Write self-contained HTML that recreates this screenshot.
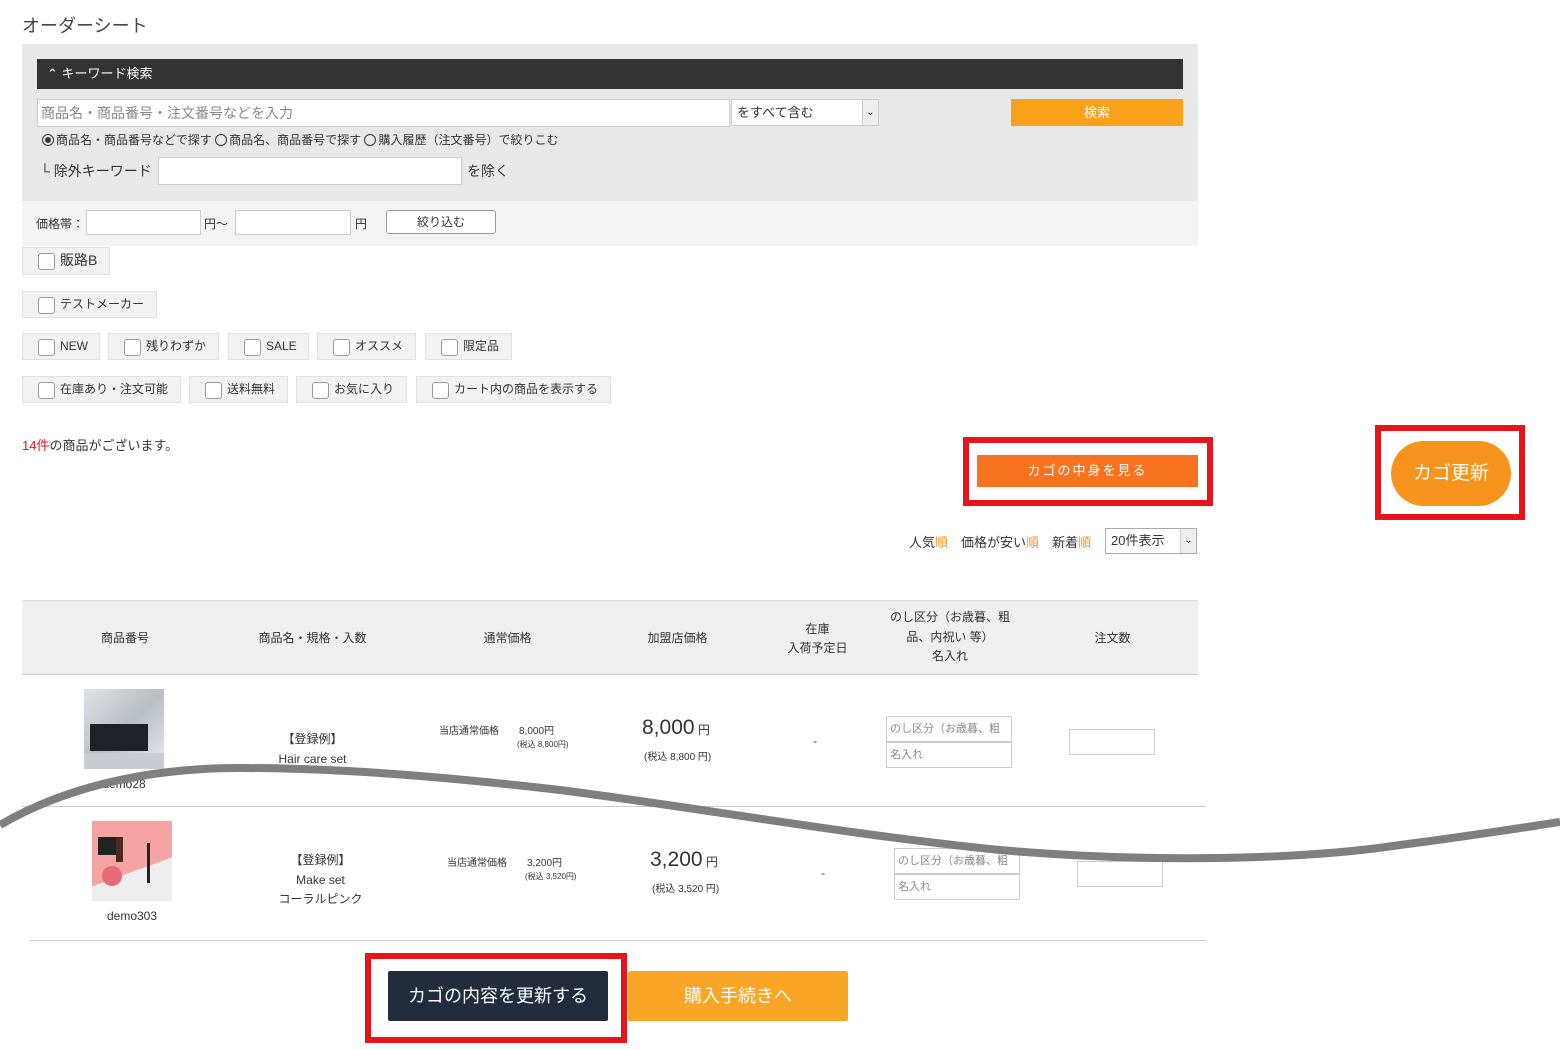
<!DOCTYPE html><html><head><meta charset="utf-8"><style>
*{box-sizing:border-box;margin:0;padding:0}
body{width:1560px;height:1050px;background:#fff;font-family:"Liberation Sans","Noto Sans CJK JP",sans-serif;color:#333;position:relative;overflow:hidden;font-size:12px}
.a{position:absolute}
.inp{position:absolute;background:#fff;border:1px solid #ccc}
.cb{position:absolute;height:27px;background:#f2f2f2;border:1px solid #e0e0e0;font-size:12px;line-height:25px;padding-left:37px}
.cb:before{content:"";position:absolute;left:15px;top:5px;width:15px;height:15px;border:1px solid #999;border-radius:3px;background:#fff}
.red{position:absolute;border:6px solid #e8141d}
.c{text-align:center}
.r{display:inline-block;width:12px;height:12px;border:1px solid #333;border-radius:50%;vertical-align:-2px;margin-right:2px;position:relative}
.r.on:after{content:"";position:absolute;left:2px;top:2px;width:6px;height:6px;border-radius:50%;background:#333}
</style></head><body>
<div class="a" style="left:22px;top:12px;font-size:18px;color:#444">オーダーシート</div>
<div class="a" style="left:22px;top:44px;width:1176px;height:157px;background:#e8e8e8"></div>
<div class="a" style="left:22px;top:201px;width:1176px;height:45px;background:#f3f3f3"></div>
<div class="a" style="left:37px;top:59px;width:1146px;height:30px;background:#333;color:#fff;font-size:13px;line-height:30px;padding-left:10px">⌃ キーワード検索</div>
<div class="inp" style="left:37px;top:99px;width:693px;height:28px;color:#888;font-size:14px;line-height:26px;padding-left:3px">商品名・商品番号・注文番号などを入力</div>
<div class="inp" style="left:731px;top:99px;width:148px;height:27px;font-size:13px;line-height:25px;padding-left:5px;color:#333">をすべて含む<span style="position:absolute;right:0;top:0;width:16px;height:25px;border-left:1px solid #ccc;background:#eee;font-size:10px;text-align:center">⌄</span></div>
<div class="a" style="left:1011px;top:99px;width:172px;height:27px;background:#f9a11b;color:#fff;font-size:13px;line-height:27px;text-align:center">検索</div>
<div class="a" style="left:42px;top:131px;font-size:12px"><span class="r on"></span>商品名・商品番号などで探す <span class="r"></span>商品名、商品番号で探す <span class="r"></span>購入履歴（注文番号）で絞りこむ</div>
<div class="a" style="left:40px;top:161px;font-size:14px">└ 除外キーワード</div>
<div class="inp" style="left:158px;top:157px;width:304px;height:28px"></div>
<div class="a" style="left:467px;top:161px;font-size:14px">を除く</div>
<div class="a" style="left:36px;top:215px;font-size:12px">価格帯：</div>
<div class="inp" style="left:86px;top:210px;width:115px;height:25px"></div>
<div class="a" style="left:204px;top:215px;font-size:12px">円～</div>
<div class="inp" style="left:235px;top:210px;width:116px;height:25px"></div>
<div class="a" style="left:355px;top:215px;font-size:12px">円</div>
<div class="a" style="left:386px;top:210px;width:110px;height:24px;border:1px solid #999;border-radius:3px;background:#fff;text-align:center;line-height:22px">絞り込む</div>
<div class="cb" style="left:22px;top:247px;width:88px;height:28px;font-size:14px">販路B</div>
<div class="cb" style="left:22px;top:291px;width:135px">テストメーカー</div>
<div class="cb" style="left:22px;top:333px;width:78px">NEW</div>
<div class="cb" style="left:108px;top:333px;width:111px">残りわずか</div>
<div class="cb" style="left:228px;top:333px;width:81px">SALE</div>
<div class="cb" style="left:317px;top:333px;width:99px">オススメ</div>
<div class="cb" style="left:425px;top:333px;width:87px">限定品</div>
<div class="cb" style="left:22px;top:376px;width:159px">在庫あり・注文可能</div>
<div class="cb" style="left:189px;top:376px;width:99px">送料無料</div>
<div class="cb" style="left:296px;top:376px;width:111px">お気に入り</div>
<div class="cb" style="left:416px;top:376px;width:195px">カート内の商品を表示する</div>
<div class="a" style="left:22px;top:435px;font-size:13px"><span style="color:#e8141d">14件</span>の商品がございます。</div>
<div class="red" style="left:963px;top:437px;width:250px;height:69px"></div>
<div class="a" style="left:977px;top:455px;width:221px;height:32px;background:#f7731f;color:#fff;font-size:13px;line-height:32px;text-align:center;letter-spacing:2px">カゴの中身を見る</div>
<div class="red" style="left:1375px;top:425px;width:150px;height:95px"></div>
<div class="a" style="left:1391px;top:441px;width:120px;height:65px;border-radius:33px;background:#f7941d;color:#fff;font-size:19px;line-height:65px;text-align:center">カゴ更新</div>
<div class="a" style="left:909px;top:532px;font-size:13px">人気<span style="color:#f7941d">順</span>　価格が安い<span style="color:#f7941d">順</span>　新着<span style="color:#f7941d">順</span></div>
<div class="inp" style="left:1105px;top:528px;width:92px;height:26px;font-size:13px;line-height:24px;padding-left:5px;color:#333;border-color:#aaa">20件表示<span style="position:absolute;right:0;top:0;width:16px;height:24px;border-left:1px solid #ccc;background:#eee;font-size:10px;text-align:center">⌄</span></div>
<div class="a" style="left:22px;top:600px;width:1176px;height:75px;background:#efefef;border-top:1px solid #ddd;border-bottom:1px solid #ccc"></div>
<div class="a c" style="left:80px;top:629px;width:90px">商品番号</div>
<div class="a c" style="left:240px;top:629px;width:145px">商品名・規格・入数</div>
<div class="a c" style="left:460px;top:629px;width:95px">通常価格</div>
<div class="a c" style="left:630px;top:629px;width:95px">加盟店価格</div>
<div class="a c" style="left:770px;top:620px;width:95px;line-height:19px">在庫<br>入荷予定日</div>
<div class="a c" style="left:880px;top:608px;width:140px;line-height:19.5px">のし区分（お歳暮、粗品、内祝い 等）<br>名入れ</div>
<div class="a c" style="left:1070px;top:629px;width:85px">注文数</div>
<div class="a" style="left:84px;top:689px;width:80px;height:80px;background:linear-gradient(135deg,#dfe2e6,#b9bec4 50%,#e8eaed)"><div class="a" style="left:6px;top:35px;width:58px;height:27px;background:#1e2227"></div><div class="a" style="left:0;top:64px;width:80px;height:16px;background:#c9cdd1"></div></div>
<div class="a c" style="left:84px;top:777px;width:80px;font-size:12px">demo28</div>
<div class="a c" style="left:240px;top:729px;width:145px;line-height:20px">【登録例】<br>Hair care set</div>
<div class="a" style="left:439px;top:722px;font-size:10px">当店通常価格　　8,000円</div>
<div class="a" style="left:517px;top:739px;font-size:8px">(税込 8,800円)</div>
<div class="a" style="left:642px;top:716px;font-size:21px">8,000<span style="font-size:12px"> 円</span></div>
<div class="a" style="left:644px;top:748px;font-size:10px">(税込 8,800 円)</div>
<div class="a" style="left:813px;top:734px">-</div>
<div class="inp" style="left:886px;top:716px;width:126px;height:26px;font-size:11px;line-height:24px;padding-left:3px;color:#888;overflow:hidden;white-space:nowrap">のし区分（お歳暮、粗</div>
<div class="inp" style="left:886px;top:742px;width:126px;height:26px;font-size:11px;line-height:24px;padding-left:3px;color:#888">名入れ</div>
<div class="inp" style="left:1069px;top:729px;width:86px;height:26px"></div>
<div class="a" style="left:22px;top:806px;width:1184px;height:1px;background:#ccc"></div>
<div class="a" style="left:92px;top:821px;width:80px;height:80px;background:linear-gradient(160deg,#f5a3a3 60%,#eee 60%)"><div class="a" style="left:6px;top:16px;width:18px;height:18px;background:#222"></div><div class="a" style="left:10px;top:45px;width:20px;height:20px;border-radius:50%;background:#e56a7a"></div><div class="a" style="left:24px;top:16px;width:7px;height:25px;background:#4a2a1a"></div><div class="a" style="left:55px;top:22px;width:3px;height:40px;background:#222"></div></div>
<div class="a c" style="left:92px;top:909px;width:80px">demo303</div>
<div class="a c" style="left:248px;top:851px;width:145px;line-height:19.5px">【登録例】<br>Make set<br>コーラルピンク</div>
<div class="a" style="left:447px;top:854px;font-size:10px">当店通常価格　　3,200円</div>
<div class="a" style="left:525px;top:871px;font-size:8px">(税込 3,520円)</div>
<div class="a" style="left:650px;top:848px;font-size:21px">3,200<span style="font-size:12px"> 円</span></div>
<div class="a" style="left:652px;top:880px;font-size:10px">(税込 3,520 円)</div>
<div class="a" style="left:821px;top:866px">-</div>
<div class="inp" style="left:894px;top:848px;width:126px;height:26px;font-size:11px;line-height:24px;padding-left:3px;color:#888;overflow:hidden;white-space:nowrap">のし区分（お歳暮、粗</div>
<div class="inp" style="left:894px;top:874px;width:126px;height:26px;font-size:11px;line-height:24px;padding-left:3px;color:#888">名入れ</div>
<div class="inp" style="left:1077px;top:861px;width:86px;height:26px"></div>
<div class="a" style="left:30px;top:940px;width:1176px;height:1px;background:#ccc"></div>
<svg class="a" style="left:0;top:0" width="1560" height="1050"><path d="M0,825 C60,790 140,768 240,768 C330,768 430,775 560,790 C700,808 850,835 1000,850 C1150,863 1300,860 1400,845 C1470,836 1520,828 1560,822" fill="none" stroke="#7f7f7f" stroke-width="8"/></svg>
<div class="red" style="left:365px;top:953px;width:262px;height:90px"></div>
<div class="a" style="left:388px;top:971px;width:220px;height:50px;background:#222c3c;color:#fff;font-size:18px;line-height:50px;text-align:center;border-radius:2px">カゴの内容を更新する</div>
<div class="a" style="left:628px;top:971px;width:220px;height:50px;background:#f9a526;color:#fff;font-size:18px;line-height:50px;text-align:center;border-radius:2px">購入手続きへ</div>
</body></html>
